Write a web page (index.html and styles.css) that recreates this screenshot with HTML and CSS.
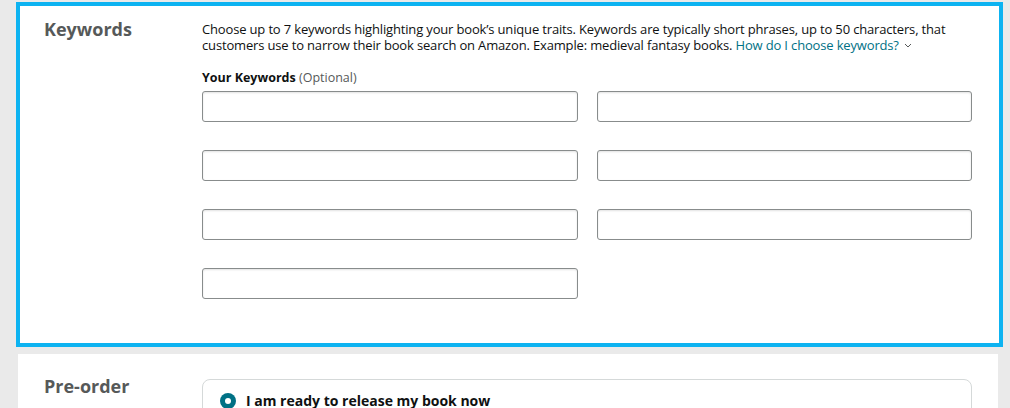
FILE: index.html
```html
<!DOCTYPE html>
<html lang="en">
<head>
<meta charset="utf-8">
<title>Keywords</title>
<link rel="stylesheet" href="styles.css">
</head>
<body>
<div class="page">
  <section class="card card-active">
    <div class="row">
      <h2 class="heading">Keywords</h2>
      <div class="content">
        <p class="desc">Choose up to 7 keywords highlighting your book’s unique traits. Keywords are typically short phrases, up to 50 characters, that customers use to narrow their book search on Amazon. Example: medieval fantasy books. <a class="link" href="#">How do I choose keywords?<svg class="chev" width="8" height="5" viewBox="0 0 8 5"><path d="M1 1 L4 4 L7 1" fill="none" stroke="#565959" stroke-width="1"/></svg></a></p>
        <div class="label"><b>Your Keywords</b> <span class="opt">(Optional)</span></div>
        <div class="grid">
          <input class="field" type="text">
          <input class="field" type="text">
          <input class="field" type="text">
          <input class="field" type="text">
          <input class="field" type="text">
          <input class="field" type="text">
          <input class="field" type="text">
        </div>
      </div>
    </div>
  </section>
  <section class="card card-plain">
    <div class="row">
      <h2 class="heading">Pre-order</h2>
      <div class="content">
        <div class="option">
          <span class="radio"><span class="dot"></span></span>
          <span class="option-text">I am ready to release my book now</span>
        </div>
      </div>
    </div>
  </section>
</div>
</body>
</html>
```
FILE: styles.css
```css
* { box-sizing: border-box; }
html, body { margin: 0; padding: 0; }
body {
  background: #eaeaea;
  font-family: "Open Sans", "Noto Sans", Arial, sans-serif;
  color: #0f1111;
  height: 408px;
  overflow: hidden;
}
.page {
  padding-top: 2px;
}
.card {
  background: #ffffff;
}
.card-active {
  margin-left: 16px;
  width: 987px;
  border: 4px solid #0db3f1;
  padding: 15px 27px 44px 24px;
}
.card-plain {
  margin-left: 18px;
  margin-top: 7px;
  width: 980px;
  padding: 24px 26px 20px 26px;
}
.row {
  display: flex;
}
.heading {
  margin: 0;
  width: 158px;
  flex: none;
  font-size: 18px;
  line-height: 16px;
  font-weight: 700;
  color: #565959;
}
.content {
  width: 770px;
  flex: none;
}
.desc {
  margin: 0;
  font-size: 13px;
  line-height: 16.4px;
  letter-spacing: -0.16px;
}
.link {
  color: #007185;
  text-decoration: none;
}
.chev {
  margin-left: 5px;
  vertical-align: 2px;
}
.label {
  margin-top: 16px;
  font-size: 12.5px;
  line-height: 16px;
}
.label b { font-weight: 700; }
.opt { color: #565959; }
.grid {
  margin-top: 5px;
  display: grid;
  grid-template-columns: 1fr 1fr;
  column-gap: 19px;
  row-gap: 28px;
}
.field {
  display: block;
  width: 100%;
  height: 31px;
  margin: 0;
  border: 1px solid #888c8c;
  border-radius: 3px;
  background: #fff;
  box-shadow: inset 0 1px 2px rgba(15, 17, 17, 0.12);
  outline: none;
}
.option {
  margin-top: 1px;
  border: 1px solid #d5d9d9;
  border-radius: 8px;
  padding: 11px 16px 14px 17px;
  display: flex;
  align-items: center;
  gap: 10px;
}
.radio {
  width: 16px;
  height: 16px;
  border-radius: 50%;
  background: #007185;
  display: flex;
  align-items: center;
  justify-content: center;
  flex: none;
}
.dot {
  width: 6px;
  height: 6px;
  border-radius: 50%;
  background: #fff;
}
.option-text {
  font-size: 14px;
  line-height: 20px;
  font-weight: 700;
}
```
